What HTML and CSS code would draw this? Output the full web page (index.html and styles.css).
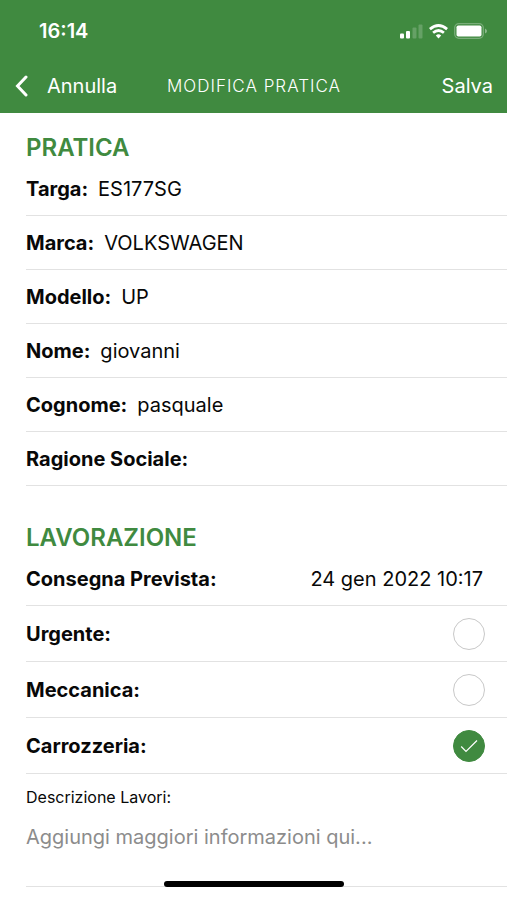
FILE: index.html
```html
<!DOCTYPE html>
<html lang="it">
<head>
<meta charset="utf-8">
<meta name="viewport" content="width=device-width, initial-scale=1">
<title>Modifica pratica</title>
<link rel="stylesheet" href="styles.css">
</head>
<body>
<header class="top">
  <div class="status">
    <time class="clock">16:14</time>
    <div class="indicators">
      <svg width="23" height="15" viewBox="0 0 23 15" fill="#fff" aria-hidden="true">
        <rect x="0" y="9.500" width="4" height="5" rx="1"/>
        <rect x="6" y="7" width="4" height="7.500" rx="1"/>
        <rect x="12.500" y="3.500" width="4" height="11" rx="1" opacity=".2"/>
        <rect x="18.500" y="0.500" width="4" height="14" rx="1" opacity=".2"/>
      </svg>
      <svg width="19" height="15" viewBox="0 0 19 15" fill="none" stroke="#fff" stroke-width="2.700" aria-hidden="true">
        <path d="M.9 5.100Q9.500-2.100 18.100 5.100"/>
        <path d="M4.100 8.800Q9.500 4.200 14.900 8.800"/>
        <path d="M6.800 11.500Q9.500 9.200 12.200 11.500L9.500 14.400Z" fill="#fff" stroke="none"/>
      </svg>
      <svg width="33" height="16" viewBox="0 0 33 16" aria-hidden="true">
        <rect x=".7" y=".7" width="28.600" height="14.600" rx="4.200" fill="none" stroke="#fff" stroke-opacity=".3" stroke-width="1.300"/>
        <rect x="2.500" y="2.500" width="25" height="11" rx="1.800" fill="#fff"/>
        <path d="M31 5.500Q33 6.500 33 8T31 10.500Z" fill="#fff" opacity=".4"/>
      </svg>
    </div>
  </div>
  <nav class="bar">
    <button class="action back" type="button">
      <svg width="13" height="22" viewBox="0 0 13 22" fill="none" stroke="#fff" stroke-width="3" stroke-linecap="round" aria-hidden="true"><path d="M11 2 2.500 11l8.500 9"/></svg>
      Annulla
    </button>
    <h1 class="title">MODIFICA PRATICA</h1>
    <button class="action save" type="submit" form="pratica">Salva</button>
  </nav>
</header>
<main>
  <form id="pratica" class="form">
    <section class="group">
      <h2 class="heading">PRATICA</h2>
      <div class="row"><label class="label" for="targa">Targa:</label><input class="value" id="targa" type="text" value="ES177SG"></div>
      <div class="row"><label class="label" for="marca">Marca:</label><input class="value" id="marca" type="text" value="VOLKSWAGEN"></div>
      <div class="row"><label class="label" for="modello">Modello:</label><input class="value" id="modello" type="text" value="UP"></div>
      <div class="row"><label class="label" for="nome">Nome:</label><input class="value" id="nome" type="text" value="giovanni"></div>
      <div class="row"><label class="label" for="cognome">Cognome:</label><input class="value" id="cognome" type="text" value="pasquale"></div>
      <div class="row"><label class="label" for="ragione">Ragione Sociale:</label><input class="value" id="ragione" type="text"></div>
    </section>
    <section class="group">
      <h2 class="heading">LAVORAZIONE</h2>
      <div class="row"><label class="label" for="consegna">Consegna Prevista:</label><input class="value date" id="consegna" type="text" value="24 gen 2022 10:17"></div>
      <div class="row option"><label class="label" for="urgente">Urgente:</label><span class="tick"><input class="check" id="urgente" type="checkbox"></span></div>
      <div class="row option"><label class="label" for="meccanica">Meccanica:</label><span class="tick"><input class="check" id="meccanica" type="checkbox"></span></div>
      <div class="row option"><label class="label" for="carrozzeria">Carrozzeria:</label><span class="tick"><input class="check" id="carrozzeria" type="checkbox" checked><svg class="mark" width="18" height="14" viewBox="0 0 18 14" fill="none" stroke="#fff" stroke-width="1.200" aria-hidden="true"><path d="M1.200 7.500 6 12.500 17 1.500"/></svg></span></div>
      <div class="notes">
        <label class="small" for="descrizione">Descrizione Lavori:</label>
        <textarea class="text" id="descrizione" rows="2" placeholder="Aggiungi maggiori informazioni qui..."></textarea>
      </div>
    </section>
  </form>
</main>
<div class="home"></div>
</body>
</html>
```
FILE: styles.css
```css
* {
  box-sizing: border-box;
}

body {
  margin: 0;
  background: #fff;
  color: #080808;
  font: 20px/28px Inter, "Liberation Sans", sans-serif;
}

h1,
h2 {
  margin: 0;
}

button,
input,
textarea {
  margin: 0;
  padding: 0;
  border: 0;
  background: none;
  color: inherit;
  font: inherit;
}

.top {
  background: #408a40;
  color: #fff;
}

.status {
  display: flex;
  align-items: center;
  justify-content: space-between;
  height: 60px;
  padding: 2px 20px 0 39px;
}

.clock {
  font-weight: 600;
}

.indicators {
  display: flex;
  align-items: center;
  gap: 6px;
}

.bar {
  display: grid;
  grid-template-columns: 1fr auto 1fr;
  align-items: center;
  height: 53px;
  padding: 0 14px 2px 15px;
}

.action {
  display: flex;
  align-items: center;
  gap: 19px;
}

.back {
  justify-self: start;
}

.save {
  justify-self: end;
}

.title {
  font-size: 17px;
  font-weight: 300;
  letter-spacing: 1px;
}

.group {
  padding: 21px 0 0 26px;
}

.group + .group {
  padding-top: 38px;
}

.heading {
  color: #408a40;
  font-size: 24px;
  font-weight: 600;
  line-height: 28px;
}

.row {
  display: flex;
  align-items: center;
  gap: 10px;
  height: 54px;
  border-bottom: 1px solid #e2e2e2;
}

.label {
  font-weight: 700;
}

.value {
  flex: 1;
  min-width: 0;
}

.date {
  padding-right: 24px;
  text-align: right;
}

.option {
  justify-content: space-between;
  height: 56px;
  padding-right: 22px;
}

.tick {
  display: grid;
  place-items: center;
}

.check {
  grid-area: 1 / 1;
  width: 32px;
  height: 32px;
  border: 1px solid #c8c8c8;
  border-radius: 50%;
  appearance: none;
}

.check:checked {
  border-color: #408a40;
  background: #408a40;
}

.mark {
  z-index: 1;
  grid-area: 1 / 1;
  pointer-events: none;
}

.notes {
  display: flex;
  flex-direction: column;
  gap: 14px;
  padding-top: 11px;
  border-bottom: 1px solid #e2e2e2;
}

.small {
  font-size: 16px;
  line-height: 24px;
}

.text {
  display: block;
  width: 100%;
  height: 63px;
  overflow: hidden;
  resize: none;
}

.text::placeholder {
  color: #8c8c8c;
}

.home {
  position: fixed;
  bottom: 13px;
  left: 50%;
  width: 180px;
  height: 6px;
  border-radius: 3px;
  background: #000;
  transform: translateX(-50%);
}
```
